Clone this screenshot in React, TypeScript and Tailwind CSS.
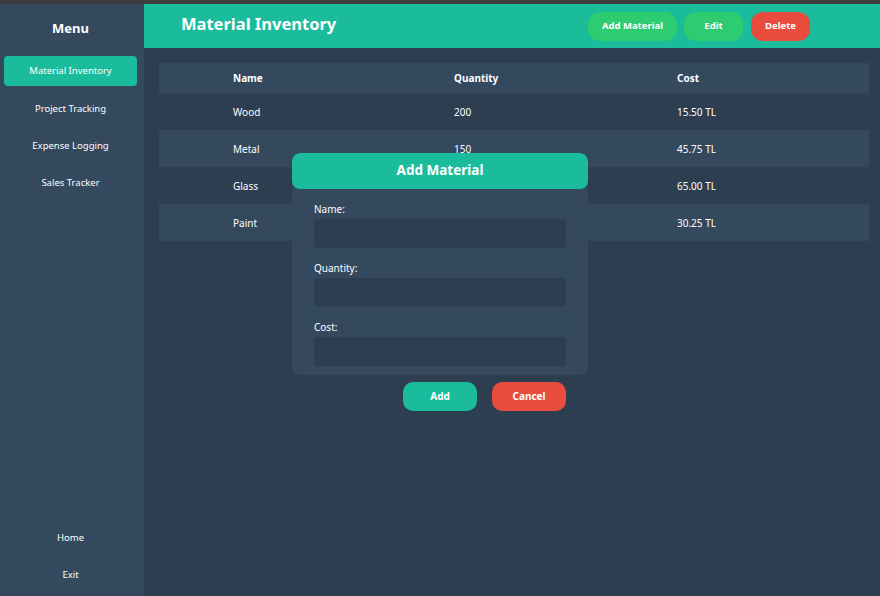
import React from "react";

const rows = [
  { name: "Wood", qty: "200", cost: "15.50 TL" },
  { name: "Metal", qty: "150", cost: "45.75 TL" },
  { name: "Glass", qty: "", cost: "65.00 TL" },
  { name: "Paint", qty: "", cost: "30.25 TL" },
];

export default function App() {
  return (
    <div
      className="w-[880px] h-[596px] flex flex-col bg-[#2c3e50] text-white overflow-hidden"
      style={{ fontFamily: '"Noto Sans", "Open Sans", sans-serif' }}
    >
      <div className="h-[4px] bg-[#3b3d3f] shrink-0" />
      <div className="flex flex-1 min-h-0">
        {/* Sidebar */}
        <aside className="w-[144px] bg-[#34495e] flex flex-col pl-[4px] pr-[7px]">
          <div className="h-[52px] flex items-start justify-center pt-[15px] text-[13px] font-bold">Menu</div>
          <div className="h-[30px] rounded-[4px] bg-[#1abc9c] flex items-center justify-center text-[9.5px]">
            Material Inventory
          </div>
          <div className="h-[37px] flex items-center justify-center text-[9.5px] mt-[5px]">Project Tracking</div>
          <div className="h-[37px] flex items-center justify-center text-[9.5px]">Expense Logging</div>
          <div className="h-[37px] flex items-center justify-center text-[9.5px]">Sales Tracker</div>
          <div className="flex-1" />
          <div className="h-[37px] flex items-center justify-center text-[9.5px]">Home</div>
          <div className="h-[37px] flex items-center justify-center text-[9.5px] mb-[2px]">Exit</div>
        </aside>

        {/* Main */}
        <main className="flex-1 flex flex-col relative">
          <header className="h-[44px] bg-[#1abc9c] flex items-center pl-[37px] pr-[70px]">
            <h1 className="text-[16.5px] font-bold flex-1 -mt-[3px]">Material Inventory</h1>
            <div className="flex gap-[7px] mt-[1px]">
              <button className="h-[29px] w-[89px] rounded-[12px] bg-[#2ecc71] text-[9.5px] font-bold ml-[1px]">Add Material</button>
              <button className="h-[29px] w-[59px] rounded-[12px] bg-[#2ecc71] text-[9.5px] font-bold">Edit</button>
              <button className="h-[29px] w-[59px] rounded-[12px] bg-[#e74c3c] text-[9.5px] font-bold ml-[1px]">Delete</button>
            </div>
          </header>

          <div className="ml-[15px] mr-[11px] mt-[15px] text-[10px]">
            <div className="grid grid-cols-[221px_223px_1fr] pl-[74px] h-[30px] items-center bg-[#34495e] font-bold">
              <div>Name</div>
              <div>Quantity</div>
              <div>Cost</div>
            </div>
            {rows.map((r, i) => (
              <div
                key={r.name}
                className={`grid grid-cols-[221px_223px_1fr] pl-[74px] pt-[2px] h-[37px] items-center ${i % 2 === 1 ? "bg-[#34495e]" : "bg-[#2c3e50]"}`}
              >
                <div>{r.name}</div>
                <div>{r.qty}</div>
                <div>{r.cost}</div>
              </div>
            ))}
          </div>

          {/* Modal */}
          <div className="absolute left-[148px] top-[149px] w-[296px] flex flex-col">
            <div className="rounded-[8px] bg-[#34495e] overflow-hidden">
              <div className="h-[36px] bg-[#1abc9c] rounded-[8px] flex items-center justify-center text-[13.5px] font-bold pb-[1px]">
                Add Material
              </div>
              <div className="px-[22px] pt-[11px] pb-[9px] flex flex-col text-[10px]">
                <label className="h-[19px] flex items-center">Name:</label>
                <div className="h-[29px] rounded-[4px] bg-[#2c3e50] w-[252px]" />
                <label className="h-[19px] flex items-center mt-[11px]">Quantity:</label>
                <div className="h-[29px] rounded-[4px] bg-[#2c3e50] w-[252px]" />
                <label className="h-[19px] flex items-center mt-[11px]">Cost:</label>
                <div className="h-[29px] rounded-[4px] bg-[#2c3e50] w-[252px]" />
              </div>
            </div>
            <div className="flex justify-end gap-[15px] pr-[22px] mt-[7px]">
              <button className="h-[29px] w-[74px] rounded-[10px] bg-[#1abc9c] text-[10px] font-bold">Add</button>
              <button className="h-[29px] w-[74px] rounded-[10px] bg-[#e74c3c] text-[10px] font-bold">Cancel</button>
            </div>
          </div>
        </main>
      </div>
    </div>
  );
}
